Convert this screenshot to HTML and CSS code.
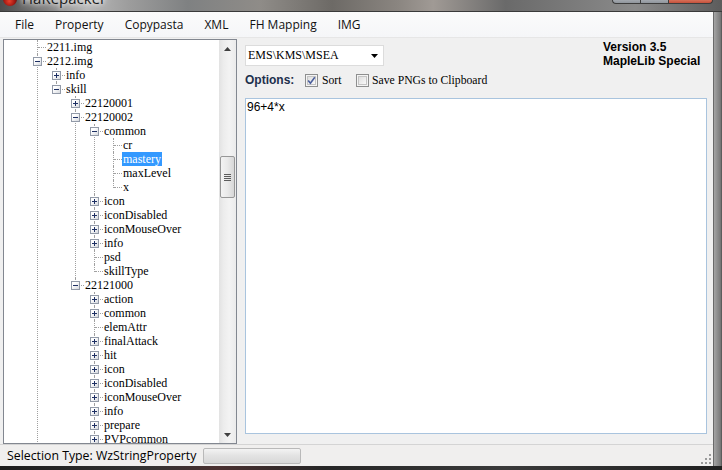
FILE: index.html
```html
<!DOCTYPE html>
<html>
<head>
<meta charset="utf-8">
<title>HaRepacker</title>
<link rel="stylesheet" href="styles.css">
</head>
<body>
<div class="window">
  <div class="titlebar">
    <span class="app-icon"></span>
    <span class="title">HaRepacker</span>
    <div class="caption">
      <span class="cb cb-min"></span><span class="cb cb-max"></span><span class="cb cb-close"></span>
    </div>
  </div>
  <div class="body-row">
    <div class="client">
      <div class="menubar">
        <span class="menu-item">File</span>
        <span class="menu-item">Property</span>
        <span class="menu-item">Copypasta</span>
        <span class="menu-item">XML</span>
        <span class="menu-item">FH Mapping</span>
        <span class="menu-item">IMG</span>
      </div>
      <div class="main">
        <div class="treebox">
          <div class="tree">
            <ul>
              <li><div class="row"><span class="lbl">2211.img</span></div></li>
              <li><div class="row"><span class="exp"></span><span class="lbl">2212.img</span></div>
                <ul>
                  <li><div class="row"><span class="exp plus"></span><span class="lbl">info</span></div></li>
                  <li class="last"><div class="row"><span class="exp"></span><span class="lbl">skill</span></div>
                    <ul>
                      <li><div class="row"><span class="exp plus"></span><span class="lbl">22120001</span></div></li>
                      <li><div class="row"><span class="exp"></span><span class="lbl">22120002</span></div>
                        <ul>
                          <li><div class="row"><span class="exp"></span><span class="lbl">common</span></div>
                            <ul>
                              <li><div class="row"><span class="lbl">cr</span></div></li>
                              <li><div class="row"><span class="lbl sel">mastery</span></div></li>
                              <li><div class="row"><span class="lbl">maxLevel</span></div></li>
                              <li class="last"><div class="row"><span class="lbl">x</span></div></li>
                            </ul>
                          </li>
                          <li><div class="row"><span class="exp plus"></span><span class="lbl">icon</span></div></li>
                          <li><div class="row"><span class="exp plus"></span><span class="lbl">iconDisabled</span></div></li>
                          <li><div class="row"><span class="exp plus"></span><span class="lbl">iconMouseOver</span></div></li>
                          <li><div class="row"><span class="exp plus"></span><span class="lbl">info</span></div></li>
                          <li><div class="row"><span class="lbl">psd</span></div></li>
                          <li class="last"><div class="row"><span class="lbl">skillType</span></div></li>
                        </ul>
                      </li>
                      <li class="last"><div class="row"><span class="exp"></span><span class="lbl">22121000</span></div>
                        <ul>
                          <li><div class="row"><span class="exp plus"></span><span class="lbl">action</span></div></li>
                          <li><div class="row"><span class="exp plus"></span><span class="lbl">common</span></div></li>
                          <li><div class="row"><span class="lbl">elemAttr</span></div></li>
                          <li><div class="row"><span class="exp plus"></span><span class="lbl">finalAttack</span></div></li>
                          <li><div class="row"><span class="exp plus"></span><span class="lbl">hit</span></div></li>
                          <li><div class="row"><span class="exp plus"></span><span class="lbl">icon</span></div></li>
                          <li><div class="row"><span class="exp plus"></span><span class="lbl">iconDisabled</span></div></li>
                          <li><div class="row"><span class="exp plus"></span><span class="lbl">iconMouseOver</span></div></li>
                          <li><div class="row"><span class="exp plus"></span><span class="lbl">info</span></div></li>
                          <li><div class="row"><span class="exp plus"></span><span class="lbl">prepare</span></div></li>
                          <li><div class="row"><span class="exp plus"></span><span class="lbl">PVPcommon</span></div></li>
                        </ul>
                      </li>
                    </ul>
                  </li>
                </ul>
              </li>
            </ul>
          </div>
          <div class="vscroll">
            <div class="sb-btn">
              <svg width="7" height="4" viewBox="0 0 7 4"><polygon points="0,4 3.5,0 7,4" fill="#404040"/></svg>
            </div>
            <div class="sb-thumb">
              <span class="grip"></span><span class="grip"></span><span class="grip"></span><span class="grip"></span>
            </div>
            <div class="sb-fill"></div>
            <div class="sb-btn">
              <svg width="7" height="4" viewBox="0 0 7 4"><polygon points="0,0 7,0 3.5,4" fill="#404040"/></svg>
            </div>
          </div>
        </div>
        <div class="panel">
          <div class="panel-top">
            <div class="controls">
              <div class="combo">
                <span class="combo-text">EMS\KMS\MSEA</span>
                <svg class="combo-arrow" width="7" height="4" viewBox="0 0 7 4"><polygon points="0,0 7,0 3.5,4" fill="#000"/></svg>
              </div>
              <div class="options">
                <span class="opt-label">Options:</span>
                <span class="check-item sort">
                  <svg width="13" height="13" viewBox="0 0 13 13">
                    <defs><linearGradient id="cbg" x1="0" y1="0" x2="1" y2="1"><stop offset="0" stop-color="#dcdcdc"/><stop offset="1" stop-color="#fbfbfb"/></linearGradient></defs>
                    <rect x="0.5" y="0.5" width="12" height="12" fill="#f4f4f4" stroke="#8e8f8f"/>
                    <rect x="2.5" y="2.5" width="8" height="8" fill="url(#cbg)" stroke="#c4c4c4"/>
                    <path d="M3.2 6.6 L5.4 9.2 L9.8 3.2" fill="none" stroke="#4a5e9c" stroke-width="1.6"/>
                  </svg>
                  <span class="check-text">Sort</span>
                </span>
                <span class="check-item">
                  <svg width="13" height="13" viewBox="0 0 13 13">
                    <rect x="0.5" y="0.5" width="12" height="12" fill="#f4f4f4" stroke="#8e8f8f"/>
                    <rect x="2.5" y="2.5" width="8" height="8" fill="url(#cbg)" stroke="#c4c4c4"/>
                  </svg>
                  <span class="check-text">Save PNGs to Clipboard</span>
                </span>
              </div>
            </div>
            <div class="version">Version 3.5<br>MapleLib Special</div>
          </div>
          <div class="textbox">96+4*x</div>
        </div>
      </div>
      <div class="statusbar">
        <span class="status-text">Selection Type: WzStringProperty</span>
        <span class="progress"></span>
        <svg class="grip-corner" width="12" height="12" viewBox="0 0 12 12">
          <g fill="#9a9a9a">
            <rect x="9" y="1" width="2" height="2"/>
            <rect x="5" y="5" width="2" height="2"/><rect x="9" y="5" width="2" height="2"/>
            <rect x="1" y="9" width="2" height="2"/><rect x="5" y="9" width="2" height="2"/><rect x="9" y="9" width="2" height="2"/>
          </g>
        </svg>
      </div>
    </div>
    <div class="frame-right"></div>
  </div>
  <div class="frame-bottom"></div>
</div>
</body>
</html>
```

FILE: styles.css
```css
* { box-sizing: border-box; }
html, body { margin: 0; padding: 0; }
body {
  width: 722px;
  height: 470px;
  overflow: hidden;
  background: #2a2a2a;
  font-family: "Open Sans", "Liberation Sans", sans-serif;
}

.window {
  width: 722px;
  height: 470px;
  display: flex;
  flex-direction: column;
}

/* ---------- title bar ---------- */
.titlebar {
  height: 12px;
  flex: none;
  display: flex;
  align-items: flex-start;
  overflow: hidden;
  border-bottom: 1px solid #3a3a3a;
  background: linear-gradient(90deg, #4c4c4c 0%, #7d7d7d 6%, #b7b7b7 12%, #9c9c9c 18%, #7f8182 26%, #8f8c88 36%, #6d6a66 46%, #8a8580 55%, #a09a95 60%, #6a6a6a 70%, #7c7c7c 80%, #8a8a8a 88%, #5c5c5c 100%);
}
.app-icon {
  width: 14px;
  height: 14px;
  margin: -8px 0 0 3px;
  border-radius: 50%;
  background: radial-gradient(circle at 45% 65%, #e8412c 0%, #a31812 45%, #3a0806 80%);
  flex: none;
}
.title {
  margin: -9px 0 0 5px;
  font-size: 15px;
  line-height: 15px;
  color: #1a1a1a;
  text-shadow: 0 0 4px #fff, 0 0 8px #fff;
}
.caption {
  margin-left: auto;
  margin-right: 9px;
  display: flex;
  margin-top: -1px;
}
.cb {
  height: 5px;
  border: 1px solid #3c3c3c;
  border-top: none;
}
.cb-min { width: 28px; background: linear-gradient(#a9aeb4, #8f959c); border-radius: 0 0 0 4px; border-right: none; }
.cb-max { width: 28px; background: linear-gradient(#a9aeb4, #8f959c); border-right: none; }
.cb-close { width: 45px; background: linear-gradient(#dc7a62, #c4503c); border-radius: 0 0 4px 0; }

/* ---------- body ---------- */
.body-row {
  flex: none;
  height: 454px;
  display: flex;
}
.client {
  width: 713px;
  flex: none;
  display: flex;
  flex-direction: column;
  background: #f0f0f0;
}
.frame-right {
  flex: 1;
  border-left: 1px solid #6a6a6a;
  background: linear-gradient(90deg, #a4a4a4, #8f8f8f 40%, #7a7a7a 80%, #4e4e4e);
}
.frame-bottom {
  flex: 1;
  background: linear-gradient(90deg, #1c1c1c, #333 20%, #4a3030 30%, #262626 45%, #3a3a3a 70%, #202020);
}

/* ---------- menu ---------- */
.menubar {
  height: 26px;
  flex: none;
  display: flex;
  align-items: center;
  padding-left: 5px;
  background: linear-gradient(#fbfbfb, #f5f6f8);
  border-bottom: 1px solid #e6e6e6;
}
.menu-item {
  padding: 0 10px;
  font-size: 12px;
  color: #111;
  line-height: 16px;
}
.menu-item + .menu-item { margin-left: 1px; }

/* ---------- main ---------- */
.main {
  height: 406px;
  flex: none;
  display: flex;
  padding: 1px 0 0 3px;
}

.treebox {
  width: 234px;
  height: 405px;
  flex: none;
  border: 1px solid #828790;
  background: #fff;
  display: flex;
  overflow: hidden;
}
.tree {
  flex: 1;
  overflow: hidden;
  font-family: "Liberation Serif", "DejaVu Serif", serif;
  font-size: 12px;
  color: #000;
}
.tree ul {
  list-style: none;
  margin: 0;
  padding: 0;
}
.tree > ul { padding-left: 33px; }
.tree li {
  position: relative;
  padding-left: 9px;
}
.tree li::before {
  content: "";
  position: absolute;
  left: 0;
  top: 0;
  bottom: 0;
  border-left: 1px dotted #a0a0a0;
}
.tree li.last::before {
  bottom: auto;
  height: 8px;
}
.tree li::after {
  content: "";
  position: absolute;
  left: 1px;
  top: 7px;
  width: 8px;
  border-top: 1px dotted #a0a0a0;
}
.tree li > ul { margin-left: 10px; }
.row {
  height: 14px;
  line-height: 14px;
  white-space: nowrap;
}
.lbl {
  display: inline-block;
  height: 14px;
  padding: 0 1px;
}
.lbl.sel {
  background: #3399ff;
  color: #fff;
}
.exp {
  position: absolute;
  left: -4px;
  top: 3px;
  width: 9px;
  height: 9px;
  border: 1px solid #929aa8;
  background: linear-gradient(135deg, #ffffff 30%, #d6d9de);
  z-index: 1;
}
.exp::before {
  content: "";
  position: absolute;
  left: 1px;
  top: 3px;
  width: 5px;
  height: 1px;
  background: #1d2f63;
}
.exp.plus::after {
  content: "";
  position: absolute;
  left: 3px;
  top: 1px;
  width: 1px;
  height: 5px;
  background: #1d2f63;
}

/* scrollbar */
.vscroll {
  width: 17px;
  flex: none;
  display: flex;
  flex-direction: column;
  background: linear-gradient(90deg, #e2e2e2, #ececec 25%, #f3f3f3 60%, #ebebeb);
}
.sb-btn {
  height: 17px;
  flex: none;
  display: flex;
  align-items: center;
  justify-content: center;
}
.sb-thumb {
  margin: 99px 1px 0 1px;
  height: 42px;
  flex: none;
  border: 1px solid #979797;
  border-radius: 2px;
  background: linear-gradient(90deg, #f3f3f3, #e9e9e9 50%, #d7d7d7);
  display: flex;
  flex-direction: column;
  align-items: center;
  justify-content: center;
  gap: 1px;
}
.grip {
  width: 7px;
  height: 1px;
  background: #5c5c5c;
}
.sb-fill { flex: 1; }

/* right panel */
.panel {
  width: 462px;
  margin-left: 8px;
  flex: none;
  display: flex;
  flex-direction: column;
  padding-top: 2px;
}
.panel-top {
  display: grid;
  grid-template-columns: 358px 1fr;
  height: 57px;
  flex: none;
}
.controls {
  padding-top: 4px;
}
.combo {
  width: 139px;
  height: 21px;
  border: 1px solid #dcdcdc;
  background: #fff;
  display: flex;
  align-items: center;
  padding-left: 2px;
  font-family: "Liberation Serif", serif;
  font-size: 12px;
}
.combo-text { flex: 1; }
.combo-arrow { margin-right: 5px; margin-top: 1px; }
.options {
  margin-top: 6px;
  height: 16px;
  display: flex;
  align-items: center;
}
.opt-label {
  width: 60px;
  flex: none;
  font-family: "Liberation Sans", sans-serif;
  font-weight: bold;
  font-size: 12px;
  color: #1e2f4c;
}
.check-item {
  display: flex;
  align-items: center;
  gap: 3px;
  font-family: "Liberation Serif", serif;
  font-size: 11.7px;
}
.check-item.sort { width: 51px; flex: none; gap: 4px; }
.check-item svg { flex: none; }
.version {
  font-family: "Liberation Sans", sans-serif;
  font-weight: bold;
  font-size: 12px;
  line-height: 13.5px;
  color: #000;
}
.textbox {
  height: 336px;
  flex: none;
  border: 1px solid #a9c4de;
  background: #fff;
  padding: 1px 1px;
  font-family: "Liberation Sans", sans-serif;
  font-size: 12px;
  line-height: 14px;
}

/* status bar */
.statusbar {
  height: 22px;
  flex: none;
  display: flex;
  align-items: center;
  padding-left: 7px;
  border-top: 1px solid #d4d4d4;
  background: #f0efee;
}
.status-text {
  font-size: 12.3px;
  color: #000;
  white-space: nowrap;
}
.progress {
  margin-left: 7px;
  width: 98px;
  height: 16px;
  flex: none;
  border: 1px solid #b9b9b9;
  border-radius: 2px;
  background: linear-gradient(#f3f3f3, #e2e2e2 50%, #d8d8d8);
}
.grip-corner {
  margin-left: auto;
  margin-right: 1px;
  margin-top: 6px;
}
```
